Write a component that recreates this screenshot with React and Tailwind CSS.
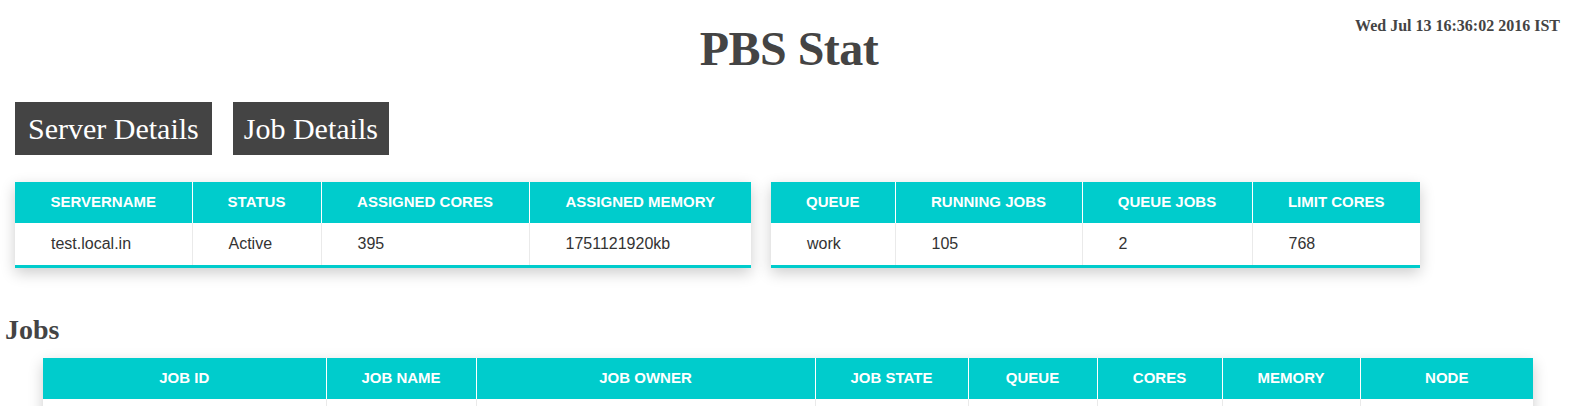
import React from 'react'

const serverCols = [
    { label: 'SERVERNAME', w: 'w-[177px]' },
    { label: 'STATUS', w: 'w-[129px]' },
    { label: 'ASSIGNED CORES', w: 'w-[208px]' },
    { label: 'ASSIGNED MEMORY', w: 'w-[222px]' },
]
const serverRow = ['test.local.in', 'Active', '395', '1751121920kb']

const queueCols = [
    { label: 'QUEUE', w: 'w-[124px]' },
    { label: 'RUNNING JOBS', w: 'w-[187px]' },
    { label: 'QUEUE JOBS', w: 'w-[170px]' },
    { label: 'LIMIT CORES', w: 'w-[168px]' },
]
const queueRow = ['work', '105', '2', '768']

const jobCols = [
    { label: 'JOB ID', w: 'w-[283px]' },
    { label: 'JOB NAME', w: 'w-[150px]' },
    { label: 'JOB OWNER', w: 'w-[339px]' },
    { label: 'JOB STATE', w: 'w-[153px]' },
    { label: 'QUEUE', w: 'w-[129px]' },
    { label: 'CORES', w: 'w-[125px]' },
    { label: 'MEMORY', w: 'w-[138px]' },
    { label: 'NODE', w: 'w-[173px]' },
]
// job list is still loading in the captured state: one blank row
const jobRows = [['', '', '', '', '', '', '', '']]

function StatTable({ cols, rows, className = '' }) {
    return (
        <table
            className={`table-fixed border-collapse bg-white font-['Liberation_Sans',Arial,sans-serif] shadow-[0_5px_14px_rgba(0,0,0,0.2)] ${className}`}
        >
            <thead>
                <tr className="bg-[#00cccc]">
                    {cols.map((c, i) => (
                        <th
                            key={i}
                            className={`${c.w} h-[41px] p-0 text-center text-[15px] font-bold text-white border-l border-white first:border-l-0`}
                        >
                            {c.label}
                        </th>
                    ))}
                </tr>
            </thead>
            <tbody>
                {rows.map((row, r) => (
                    <tr key={r} className="border-b-[3px] border-[#00cccc]">
                        {row.map((cell, i) => (
                            <td
                                key={i}
                                className="h-[43px] py-0 pl-9 pr-2 text-left text-[16px] text-[#333] border-l border-[#eaeaea] first:border-l-0"
                            >
                                {cell}
                            </td>
                        ))}
                    </tr>
                ))}
            </tbody>
        </table>
    )
}

export default function App() {
    return (
        <div className="min-h-screen bg-white font-['Liberation_Serif','Times_New_Roman',serif] text-[#444]">
            {/* title row with timestamp at the far right */}
            <header className="grid grid-cols-[1fr_auto_1fr] pt-[18px]">
                <div />
                <h1 className="mt-[7px] text-[48px] leading-none font-bold tracking-[-0.5px] text-[#444]">PBS Stat</h1>
                <div className="flex justify-end pr-[18px]">
                    <span className="text-[16px] leading-none font-bold text-[#444]">Wed Jul 13 16:36:02 2016 IST</span>
                </div>
            </header>

            <nav className="mt-[29px] flex gap-[21px] pl-[15px]">
                <button className="h-[53px] bg-[#444] px-[13px] text-[30px] leading-[53px] text-white">Server Details</button>
                <button className="h-[53px] bg-[#444] px-[11px] text-[30px] leading-[53px] text-white">Job Details</button>
            </nav>

            <section className="mt-[27px] flex items-start gap-[20px] pl-[15px]">
                <StatTable cols={serverCols} rows={[serverRow]} className="w-[736px]" />
                <StatTable cols={queueCols} rows={[queueRow]} className="w-[649px]" />
            </section>

            <h2 className="mt-[48px] pl-[5px] text-[28px] leading-none font-bold text-[#444]">Jobs</h2>

            <section className="mt-[14px] pl-[43px] pb-8">
                <StatTable cols={jobCols} rows={jobRows} className="w-[1490px]" />
            </section>
        </div>
    )
}
